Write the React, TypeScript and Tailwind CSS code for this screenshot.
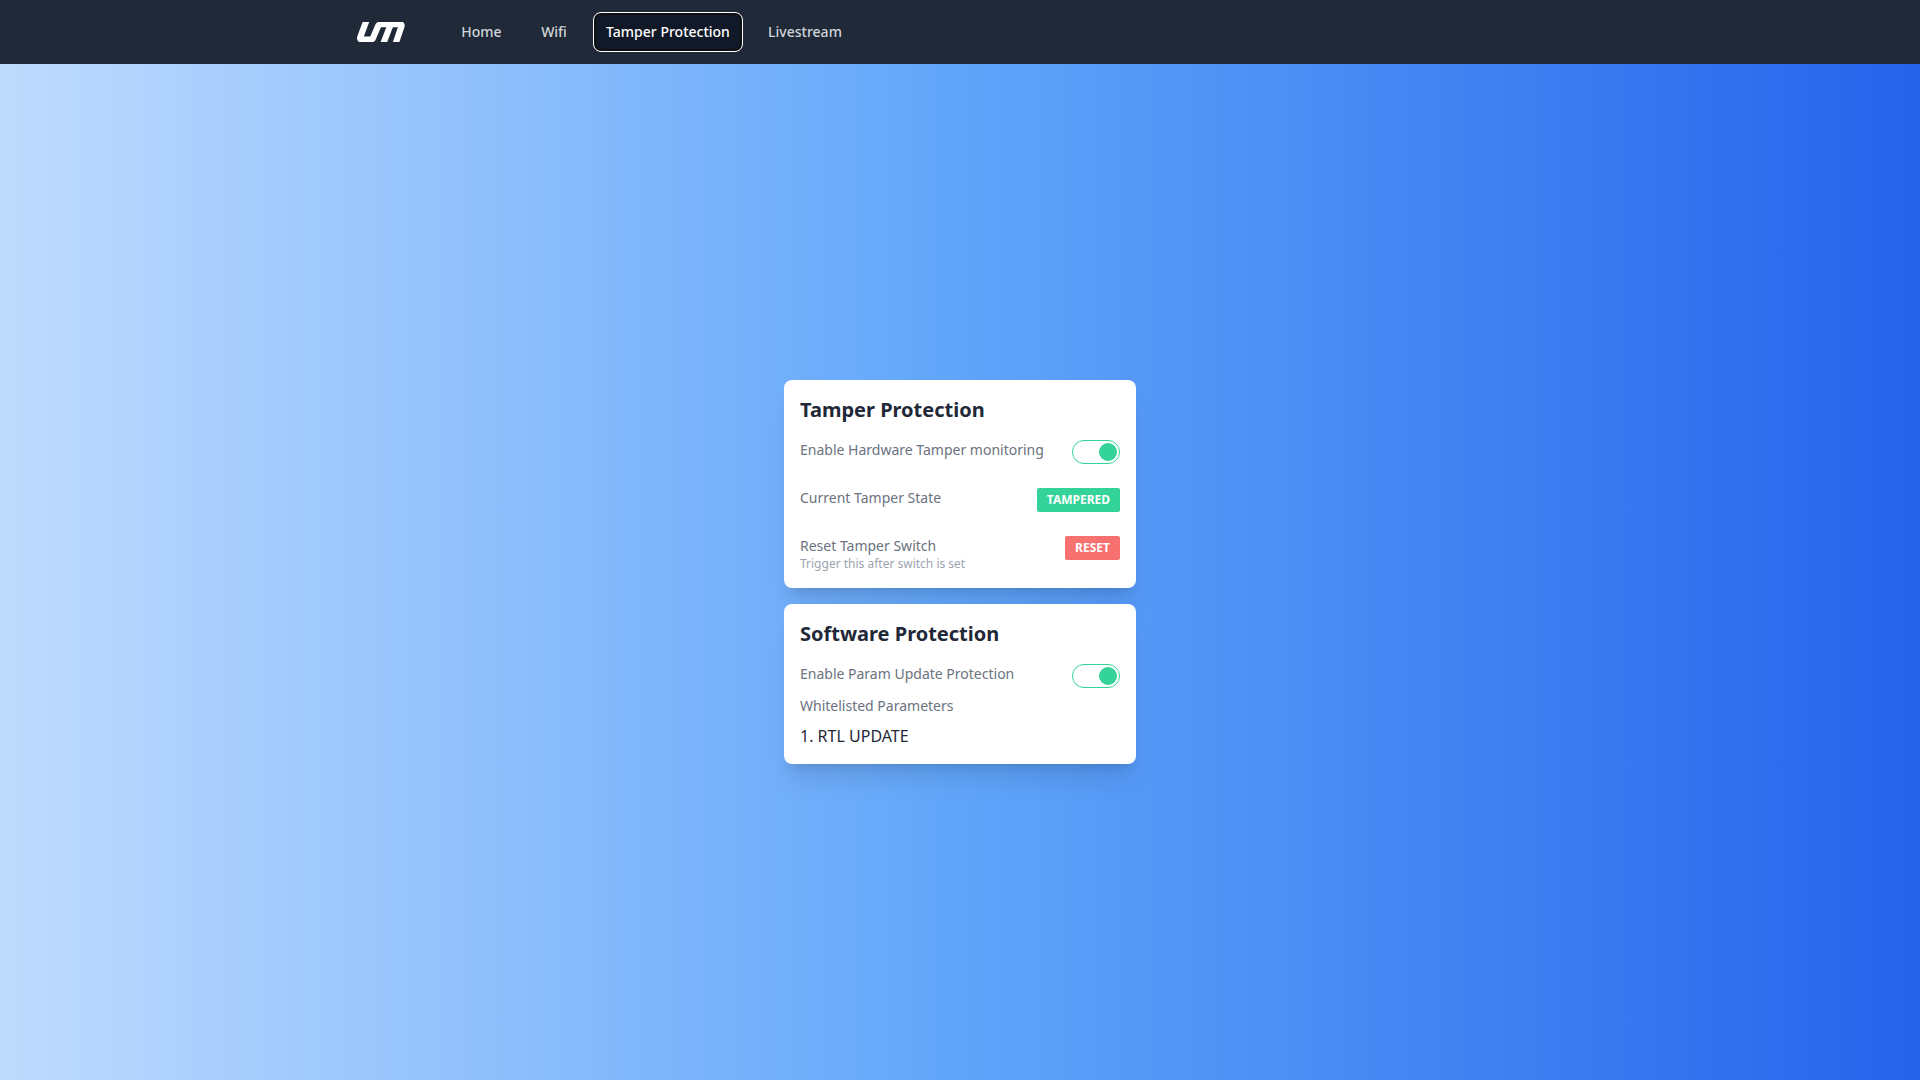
const navLinks = [
  { name: "Home", width: "w-[63px]", current: false },
  { name: "Wifi", width: "w-[50px]", current: false },
  { name: "Tamper Protection", width: "w-[146px]", current: true },
  { name: "Livestream", width: "w-[96px]", current: false },
];

function Logo() {
  return (
    <svg viewBox="0 0 48 20" className="h-5 w-12" role="img" aria-label="UM" fill="none">
      <path
        d="M9.3 -1 L3.4 14.8 Q2.4 17.6 4.8 17.6 H13.2 Q15.3 17.6 16 16 L21 4.2 Q22 2.2 24.3 2.2 H42.6 Q45.4 2.2 44.3 4.8 L38.8 21"
        stroke="white"
        strokeWidth="6.2"
      />
      <path d="M33.8 2 L26.5 21" stroke="white" strokeWidth="6.2" />
    </svg>
  );
}

function Toggle({ id }: { id: string }) {
  return (
    <input
      id={id}
      type="checkbox"
      role="switch"
      defaultChecked
      className="flex h-6 w-12 shrink-0 cursor-pointer appearance-none items-center rounded-full border border-gray-300 bg-white p-0.5 before:size-[18px] before:rounded-full before:bg-gray-300 checked:justify-end checked:border-[#34d399] checked:before:bg-[#34d399]"
    />
  );
}

export default function App() {
  return (
    <div className="flex min-h-screen flex-col bg-linear-to-r/srgb from-[#bfdbfe] via-[#60a5fa] to-[#2563eb] font-['Noto_Sans',sans-serif] text-[#1f2937]">
      <nav className="bg-[#1f2937]">
        <div className="mx-auto flex h-16 max-w-7xl items-center px-8">
          <a href="#home" className="ml-[5px] mr-[45px]">
            <Logo />
          </a>
          <div className="flex gap-4">
            {navLinks.map((link) => (
              <a
                key={link.name}
                href={"#" + link.name.toLowerCase().replace(" ", "-")}
                aria-current={link.current ? "page" : undefined}
                className={
                  "flex justify-center rounded-md py-2 text-sm font-medium whitespace-nowrap " +
                  link.width +
                  (link.current
                    ? " bg-[#111827] text-white outline outline-offset-1 outline-white ring-1 ring-[#101010] inset-ring-1 inset-ring-[#101010]"
                    : " text-[#d1d5db]")
                }
              >
                {link.name}
              </a>
            ))}
          </div>
        </div>
      </nav>

      <main className="flex flex-1 flex-col items-center justify-center gap-4">
        <section className="w-88 rounded-lg bg-white p-4 shadow-xl">
          <h2 className="text-xl font-bold">Tamper Protection</h2>
          <div className="mt-4 flex flex-col gap-6">
            <div className="flex items-start justify-between">
              <label htmlFor="hardware" className="text-sm text-[#6b7280]">
                Enable Hardware Tamper monitoring
              </label>
              <Toggle id="hardware" />
            </div>
            <div className="flex items-start justify-between">
              <p className="text-sm text-[#6b7280]">Current Tamper State</p>
              <span className="flex h-6 w-[83px] justify-center rounded-xs bg-[#34d399] pt-1 text-xs font-bold text-white">
                TAMPERED
              </span>
            </div>
            <div className="flex items-start justify-between">
              <div>
                <p className="text-sm text-[#6b7280]">Reset Tamper Switch</p>
                <p className="text-xs text-[#9ca3af]">Trigger this after switch is set</p>
              </div>
              <button
                type="button"
                className="flex h-6 w-[55px] justify-center rounded-xs bg-[#f87171] pt-1 text-xs font-bold text-white"
              >
                RESET
              </button>
            </div>
          </div>
        </section>

        <section className="w-88 rounded-lg bg-white p-4 shadow-xl">
          <h2 className="text-xl font-bold">Software Protection</h2>
          <div className="mt-4 flex items-start justify-between">
            <label htmlFor="params" className="text-sm text-[#6b7280]">
              Enable Param Update Protection
            </label>
            <Toggle id="params" />
          </div>
          <p className="mt-2 text-sm text-[#6b7280]">Whitelisted Parameters</p>
          <ol className="mt-2 list-inside list-decimal">
            <li>RTL UPDATE</li>
          </ol>
        </section>
      </main>
    </div>
  );
}
